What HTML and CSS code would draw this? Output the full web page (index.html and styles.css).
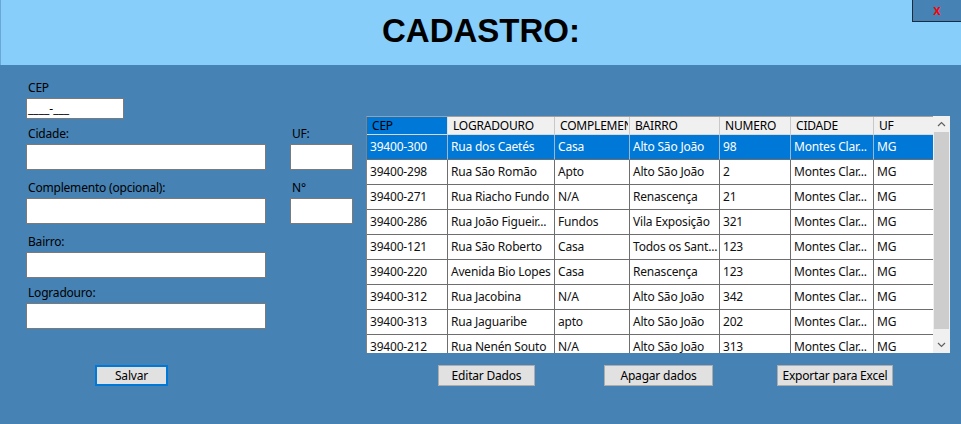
FILE: index.html
```html
<!DOCTYPE html>
<html lang="pt-BR">
<head>
<meta charset="utf-8">
<title>Cadastro</title>
<link rel="stylesheet" href="styles.css">
</head>
<body>
<div class="window">
  <header class="titlebar">
    <h1 class="title">CADASTRO:</h1>
    <button class="close-btn" type="button">X</button>
  </header>
  <main class="content">
    <section class="form">
      <div class="row">
        <div class="field">
          <label class="label">CEP</label>
          <div class="input input-cep">____-___</div>
        </div>
      </div>
      <div class="row row-close">
        <div class="field">
          <label class="label">Cidade:</label>
          <div class="input input-wide"></div>
        </div>
        <div class="field">
          <label class="label">UF:</label>
          <div class="input input-small"></div>
        </div>
      </div>
      <div class="row">
        <div class="field">
          <label class="label">Complemento (opcional):</label>
          <div class="input input-wide"></div>
        </div>
        <div class="field">
          <label class="label">N°</label>
          <div class="input input-small"></div>
        </div>
      </div>
      <div class="row">
        <div class="field">
          <label class="label">Bairro:</label>
          <div class="input input-wide"></div>
        </div>
      </div>
      <div class="row row-close">
        <div class="field">
          <label class="label">Logradouro:</label>
          <div class="input input-wide"></div>
        </div>
      </div>
    </section>

    <section class="grid-panel">
      <div class="grid-box">
        <div class="grid-area">
          <table class="grid">
            <thead>
              <tr>
                <th class="c-cep th-selected">CEP</th>
                <th class="c-log">LOGRADOURO</th>
                <th class="c-comp"><span class="clip">COMPLEMENTO</span></th>
                <th class="c-bai">BAIRRO</th>
                <th class="c-num">NUMERO</th>
                <th class="c-cid">CIDADE</th>
                <th class="c-uf">UF</th>
              </tr>
            </thead>
            <tbody>
              <tr class="selected"><td>39400-300</td><td>Rua dos Caetés</td><td>Casa</td><td>Alto São João</td><td>98</td><td>Montes Clar...</td><td>MG</td></tr>
              <tr><td>39400-298</td><td>Rua São Romão</td><td>Apto</td><td>Alto São João</td><td>2</td><td>Montes Clar...</td><td>MG</td></tr>
              <tr><td>39400-271</td><td>Rua Riacho Fundo</td><td>N/A</td><td>Renascença</td><td>21</td><td>Montes Clar...</td><td>MG</td></tr>
              <tr><td>39400-286</td><td>Rua João Figueir...</td><td>Fundos</td><td>Vila Exposição</td><td>321</td><td>Montes Clar...</td><td>MG</td></tr>
              <tr><td>39400-121</td><td>Rua São Roberto</td><td>Casa</td><td>Todos os Sant...</td><td>123</td><td>Montes Clar...</td><td>MG</td></tr>
              <tr><td>39400-220</td><td>Avenida Bio Lopes</td><td>Casa</td><td>Renascença</td><td>123</td><td>Montes Clar...</td><td>MG</td></tr>
              <tr><td>39400-312</td><td>Rua Jacobina</td><td>N/A</td><td>Alto São João</td><td>342</td><td>Montes Clar...</td><td>MG</td></tr>
              <tr><td>39400-313</td><td>Rua Jaguaribe</td><td>apto</td><td>Alto São João</td><td>202</td><td>Montes Clar...</td><td>MG</td></tr>
              <tr><td>39400-212</td><td>Rua Nenén Souto</td><td>N/A</td><td>Alto São João</td><td>313</td><td>Montes Clar...</td><td>MG</td></tr>
            </tbody>
          </table>
        </div>
        <div class="scrollbar">
          <div class="sb-arrow">
            <svg width="9" height="6" viewBox="0 0 9 6"><polyline points="1,5 4.5,1.5 8,5" fill="none" stroke="#606060" stroke-width="1.2"/></svg>
          </div>
          <div class="sb-track"><div class="sb-thumb"></div></div>
          <div class="sb-arrow">
            <svg width="9" height="6" viewBox="0 0 9 6"><polyline points="1,1 4.5,4.5 8,1" fill="none" stroke="#606060" stroke-width="1.2"/></svg>
          </div>
        </div>
      </div>
    </section>

    <div class="left-actions">
      <button class="btn btn-primary btn-salvar" type="button">Salvar</button>
    </div>
    <div class="right-actions">
      <button class="btn btn-editar" type="button">Editar Dados</button>
      <button class="btn btn-apagar" type="button">Apagar dados</button>
      <button class="btn btn-exportar" type="button">Exportar para Excel</button>
    </div>
  </main>
</div>
</body>
</html>
```

FILE: styles.css
```css
* { box-sizing: border-box; }

html, body {
  margin: 0;
  padding: 0;
}

body {
  width: 961px;
  height: 424px;
  overflow: hidden;
  background: #4682B4;
  font-family: "Noto Sans", "Open Sans", sans-serif;
  font-size: 12px;
  letter-spacing: -0.2px;
  color: #000;
}

.window {
  width: 961px;
  height: 424px;
  background: #4682B4;
}

.titlebar {
  position: relative;
  height: 65px;
  background: #87CEFA;
  border-left: 1px solid #6aa6d6;
  padding-top: 12px;
}

.title {
  margin: 0;
  text-align: center;
  font-family: "Liberation Sans", Arial, sans-serif;
  font-weight: bold;
  font-size: 33px;
  line-height: 38px;
  letter-spacing: 0;
  color: #000;
}

.close-btn {
  position: absolute;
  top: 0;
  right: 0;
  width: 49px;
  height: 22px;
  margin: 0;
  padding: 0;
  background: #4682B4;
  border: none;
  border-left: 1px solid #1c2c3c;
  border-bottom: 1px solid #1c2c3c;
  color: #ff0000;
  font-family: "Noto Sans", sans-serif;
  font-size: 11px;
  font-weight: bold;
  line-height: 18px;
  letter-spacing: 0;
}

.content {
  display: grid;
  grid-template-columns: 366px 1fr;
  grid-template-rows: 300px 21px;
}

/* ---------- form ---------- */
.form {
  display: flex;
  flex-direction: column;
  padding: 15px 0 0 26px;
}

.row {
  display: flex;
  gap: 24px;
  margin-top: 10px;
}

.row:first-child { margin-top: 0; }
.row.row-close { margin-top: 7px; }

.field {
  display: flex;
  flex-direction: column;
}

.label {
  display: block;
  height: 15px;
  line-height: 15px;
  margin-bottom: 3px;
  padding-left: 2px;
  white-space: nowrap;
}

.input {
  background: #fff;
  border: 1px solid #7a7a7a;
  height: 26px;
}

.input-cep {
  width: 98px;
  height: 21px;
  line-height: 19px;
  padding-left: 1px;
  letter-spacing: 0;
}

.input-wide { width: 240px; }
.input-small { width: 63px; }

/* ---------- grid ---------- */
.grid-panel {
  padding-top: 51px;
}

.grid-box {
  display: flex;
  width: 584px;
  height: 237px;
}

.grid-area {
  width: 567px;
  height: 237px;
  overflow: hidden;
  background: #fff;
}

.grid {
  table-layout: fixed;
  border-collapse: separate;
  border-spacing: 0;
  width: 567px;
  border-left: 1px solid #828282;
  border-top: 1px solid #a0a0a0;
}

.grid th,
.grid td {
  white-space: nowrap;
  overflow: hidden;
  text-align: left;
  font-weight: normal;
  padding: 0;
}

.grid th {
  height: 18px;
  line-height: 17px;
  padding-left: 5px;
  background: #f0f0f0;
  border-right: 1px solid #c8c8c8;
  border-bottom: 1px solid #d8d8d8;
  text-overflow: clip;
}

.grid th .clip {
  display: block;
  width: 68px;
  overflow: hidden;
}

.grid th.th-selected {
  background: #0078D7;
  border-right-color: #e0e0e0;
}

.grid td {
  height: 25px;
  line-height: 24px;
  padding-left: 3px;
  border-right: 1px solid #6e6e6e;
  border-bottom: 1px solid #6e6e6e;
  color: #111;
}

.grid th:last-child,
.grid td:last-child { border-right: none; }

.grid tr.selected td {
  background: #0078D7;
  color: #fff;
  border-right-color: #9ab8d8;
}

.c-cep { width: 81px; }
.c-log { width: 107px; }
.c-comp { width: 75px; }
.c-bai { width: 90px; }
.c-num { width: 71px; }
.c-cid { width: 83px; }
.c-uf { width: 59px; }

.scrollbar {
  width: 17px;
  height: 237px;
  display: flex;
  flex-direction: column;
  background: #f0f0f0;
}

.sb-arrow {
  height: 16px;
  display: flex;
  align-items: center;
  justify-content: center;
}

.sb-track {
  flex: 1;
  padding: 0 1px 7px 1px;
}

.sb-thumb {
  height: 100%;
  background: #cdcdcd;
}

.sb-arrow:last-child { height: 17px; }

/* ---------- buttons ---------- */
.btn {
  height: 21px;
  margin: 0;
  padding: 0;
  background: #e1e1e1;
  border: 1px solid #adadad;
  font-family: "Noto Sans", "Open Sans", sans-serif;
  font-size: 12px;
  letter-spacing: -0.2px;
  line-height: 17px;
  color: #000;
  text-align: center;
}

.btn-primary {
  border: 2px solid #0078D7;
}

.left-actions {
  padding-left: 95px;
}

.btn-salvar { width: 73px; }

.right-actions {
  display: flex;
  padding-left: 72px;
}

.btn-editar { width: 97px; }
.btn-apagar { width: 109px; margin-left: 69px; }
.btn-exportar { width: 116px; margin-left: 64px; }
```
